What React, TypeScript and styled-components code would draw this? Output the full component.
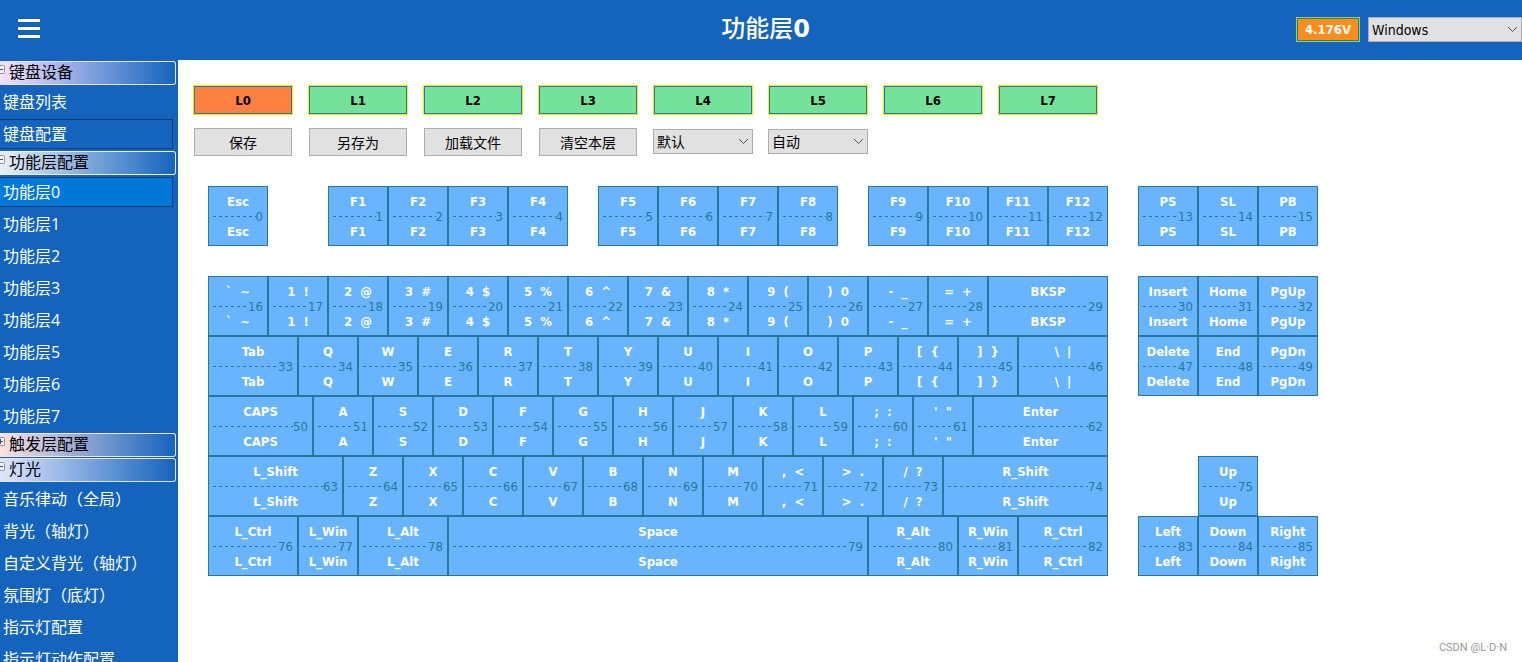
import React, { useState } from "react";
import styled, { createGlobalStyle, css } from "styled-components";

const uiFont = `"DejaVu Sans Condensed", "DejaVu Sans", "Noto Sans CJK SC", sans-serif`;
const menuFont = `"Open Sans", "Noto Sans CJK SC", sans-serif`;

const GlobalStyle = createGlobalStyle`
  * { box-sizing: border-box; }
  html, body, #root { height: 100%; }
  body { margin: 0; background: #fff; overflow: hidden; }
  button, select { font: inherit; margin: 0; border-radius: 0; }
`;

const Page = styled.div`
  display: flex;
  flex-direction: column;
  height: 100vh;
  font-family: ${uiFont};
`;

const Header = styled.header`
  flex: none;
  display: grid;
  grid-template-columns: 1fr auto 1fr;
  align-items: center;
  height: 60px;
  padding: 0 0 1px 9px;
  background: #1464be;
  color: #fff;
`;

const MenuButton = styled.button`
  justify-self: start;
  display: flex;
  padding: 8px;
  border: 0;
  background: none;
  color: #fff;
`;

const Title = styled.h1`
  margin: 0;
  padding-bottom: 1px;
  font: 700 24px/32px "DejaVu Sans", "Noto Sans CJK SC", sans-serif;
`;

const TitleText = styled.span`
  font-weight: 500;
`;

const HeaderTools = styled.div`
  justify-self: end;
  display: flex;
  align-items: center;
  gap: 8px;
`;

const Voltage = styled.output`
  width: 64px;
  height: 25px;
  border: 1px solid #b4b4b4;
  outline: 1px solid #12a012;
  outline-offset: -2px;
  background: #ff8c1e;
  font-size: 13px;
  font-weight: 700;
  line-height: 23px;
  text-align: center;
`;

const SelectBox = styled.span<{ $width: number }>`
  display: grid;
  align-items: center;
  width: ${(p) => p.$width}px;

  > * { grid-area: 1 / 1; }
  > svg { justify-self: end; margin-right: 4px; pointer-events: none; }
`;

const Select = styled.select`
  appearance: none;
  width: 100%;
  height: 25px;
  padding: 0 20px 0 3px;
  border: 1px solid #adadad;
  background: #e1e1e1;
  color: #000;
  font-size: 14px;
`;

const Body = styled.div`
  flex: 1;
  display: flex;
  min-height: 0;
`;

const Sidebar = styled.nav`
  flex: none;
  width: 178px;
  padding-top: 1px;
  overflow: hidden;
  background: #1464be;
  font: 16px/22px ${menuFont};
`;

const GroupHeader = styled.button<{ $tint: string }>`
  display: flex;
  align-items: center;
  gap: 4px;
  width: 176px;
  height: 24px;
  margin-bottom: 1px;
  padding: 0 0 2px;
  border: 1px solid ${(p) => p.$tint};
  border-left: 0;
  border-radius: 0 3px 3px 0;
  background: linear-gradient(90deg, ${(p) => p.$tint}, #1464be);
  color: #000;
  text-align: left;

  > svg { margin-bottom: 6px; }
`;

const MenuList = styled.ul`
  margin: 0;
  padding: 1px 0 0;
  list-style: none;
`;

const MenuItem = styled.a<{ $state?: "active" | "focused" }>`
  display: block;
  width: 173px;
  height: 30px;
  margin-bottom: 2px;
  padding-left: 3px;
  border: 1px solid transparent;
  border-left: 0;
  color: #fff;
  line-height: 28px;
  text-decoration: none;
  white-space: nowrap;
  ${(p) => p.$state && css`border-color: #0c3c72;`}
  ${(p) => p.$state === "active" && css`background: #0078d7;`}
`;

const Main = styled.main`
  flex: 1;
  min-width: 0;
  display: flex;
  flex-direction: column;
  padding: 25px 15px 6px;
`;

const Bar = styled.div`
  display: flex;
  gap: 15px;
`;

const LayerButton = styled.button<{ $on: boolean }>`
  width: 100px;
  height: 30px;
  padding: 0;
  border: 1px solid #f0f000;
  outline: 1px solid #28789b;
  outline-offset: -2px;
  background: ${(p) => (p.$on ? "#ff8040" : "#74e29a")};
  font-size: 13px;
  font-weight: 700;
`;

const ActionBar = styled(Bar)`
  align-items: flex-start;
  margin-top: 13px;
`;

const ActionButton = styled.button`
  width: 98px;
  height: 28px;
  margin: 0 1px;
  padding: 0;
  border: 1px solid #adadad;
  background: #e1e1e1;
  color: #000;
  font-size: 14px;
`;

const ActionSelects = styled(Bar)`
  padding-top: 1px;
`;

const Keyboard = styled.div`
  margin-top: 30px;
  padding-left: 15px;
`;

const KeyRow = styled.div<{ $gapAfter?: boolean }>`
  display: flex;
  margin-bottom: ${(p) => (p.$gapAfter ? 30 : 0)}px;
`;

const KeyGroup = styled.div<{ $gap: number }>`
  display: flex;
  margin-left: ${(p) => p.$gap}px;
`;

const KeyCap = styled.button<{ $width: number }>`
  flex: none;
  display: flex;
  flex-direction: column;
  justify-content: center;
  width: ${(p) => p.$width}px;
  height: 60px;
  padding: 2px 4px 0;
  border: 1px solid #28789b;
  background: #69b4ff;
  color: #fff;
  font-size: 13px;
  font-weight: 700;
  line-height: 16px;
  text-align: center;
  white-space: pre;
`;

const KeyDivider = styled.span`
  display: flex;
  align-items: center;
  height: 14px;
  color: #28789b;
  font-weight: 400;

  &::before {
    content: "";
    flex: 1;
    height: 1px;
    margin-bottom: 2px;
    background: repeating-linear-gradient(90deg, #28789b 0 3px, transparent 3px 6px);
  }
`;

const Watermark = styled.footer`
  margin-top: auto;
  align-self: flex-end;
  color: #999;
  font: 11px/16px Roboto, sans-serif;
`;

type KeySpec = string | [string, number];
type KeyGroupSpec = { gap?: number; first: number; keys: KeySpec[] };

const rows: KeyGroupSpec[][] = [
  [
    { first: 0, keys: ["Esc"] },
    { gap: 60, first: 1, keys: ["F1", "F2", "F3", "F4"] },
    { gap: 30, first: 5, keys: ["F5", "F6", "F7", "F8"] },
    { gap: 30, first: 9, keys: ["F9", "F10", "F11", "F12"] },
    { gap: 30, first: 13, keys: ["PS", "SL", "PB"] },
  ],
  [
    {
      first: 16,
      keys: ["`  ~", "1  !", "2  @", "3  #", "4  $", "5  %", "6  ^", "7  &", "8  *", "9  (", ")  0", "-  _", "=  +", ["BKSP", 120]],
    },
    { gap: 30, first: 30, keys: ["Insert", "Home", "PgUp"] },
  ],
  [
    { first: 33, keys: [["Tab", 90], "Q", "W", "E", "R", "T", "Y", "U", "I", "O", "P", "[  {", "]  }", ["\\  |", 90]] },
    { gap: 30, first: 47, keys: ["Delete", "End", "PgDn"] },
  ],
  [{ first: 50, keys: [["CAPS", 105], "A", "S", "D", "F", "G", "H", "J", "K", "L", ";  :", "'  \"", ["Enter", 135]] }],
  [
    { first: 63, keys: [["L_Shift", 135], "Z", "X", "C", "V", "B", "N", "M", ",  <", ">  .", "/  ?", ["R_Shift", 165]] },
    { gap: 90, first: 75, keys: ["Up"] },
  ],
  [
    {
      first: 76,
      keys: [["L_Ctrl", 90], "L_Win", ["L_Alt", 90], ["Space", 420], ["R_Alt", 90], "R_Win", ["R_Ctrl", 90]],
    },
    { gap: 30, first: 83, keys: ["Left", "Down", "Right"] },
  ],
];

const groups = [
  { title: "键盘设备", tint: "#f5e1ff", open: true, items: ["键盘列表", "键盘配置"] },
  {
    title: "功能层配置",
    tint: "#ebf0f5",
    open: true,
    items: ["功能层0", "功能层1", "功能层2", "功能层3", "功能层4", "功能层5", "功能层6", "功能层7"],
  },
  { title: "触发层配置", tint: "#ffe1e1", open: false, items: [] },
  {
    title: "灯光",
    tint: "#e1e6ff",
    open: true,
    items: ["音乐律动（全局）", "背光（轴灯）", "自定义背光（轴灯）", "氛围灯（底灯）", "指示灯配置", "指示灯动作配置"],
  },
];

const Chevron = () => (
  <svg width="11" height="7" viewBox="0 0 11 7" fill="none" stroke="#505050" aria-hidden="true">
    <path d="M1 1l4.500 4.500L10 1" />
  </svg>
);

const Toggle = ({ open }: { open: boolean }) => (
  <svg width="5" height="9" viewBox="4 0 5 9" aria-hidden="true">
    <rect x="0.500" y="0.500" width="8" height="8" rx="1" fill="#f5f5f5" stroke="#919191" />
    <path d={open ? "M2 4.500h5" : "M2 4.500h5M4.500 2v5"} stroke="#2850a0" />
  </svg>
);

function Dropdown({ label, options, width }: { label: string; options: string[]; width: number }) {
  return (
    <SelectBox $width={width}>
      <Select aria-label={label}>
        {options.map((o) => (
          <option key={o}>{o}</option>
        ))}
      </Select>
      <Chevron />
    </SelectBox>
  );
}

function Key({ spec, index }: { spec: KeySpec; index: number }) {
  const [label, width] = typeof spec === "string" ? [spec, 60] : spec;
  return (
    <KeyCap $width={width}>
      <span>{label}</span>
      <KeyDivider>{index}</KeyDivider>
      <span>{label}</span>
    </KeyCap>
  );
}

export default function App() {
  const [layer, setLayer] = useState(0);
  const stateOf = (item: string) =>
    item === `功能层${layer}` ? "active" : item === "键盘配置" ? "focused" : undefined;

  return (
    <Page>
      <GlobalStyle />
      <Header>
        <MenuButton aria-label="菜单">
          <svg width="24" height="23" viewBox="0 0 24 23" stroke="#fff" strokeWidth="3" aria-hidden="true">
            <path d="M1 2.500h22M1 10.500h22M1 18.500h22" />
          </svg>
        </MenuButton>
        <Title>
          <TitleText>功能层</TitleText>
          {layer}
        </Title>
        <HeaderTools>
          <Voltage>4.176V</Voltage>
          <Dropdown label="系统" options={["Windows", "Mac"]} width={154} />
        </HeaderTools>
      </Header>
      <Body>
        <Sidebar>
          {groups.map((g) => (
            <section key={g.title}>
              <GroupHeader $tint={g.tint} aria-expanded={g.open}>
                <Toggle open={g.open} />
                {g.title}
              </GroupHeader>
              {g.open && (
                <MenuList>
                  {g.items.map((item) => (
                    <li key={item}>
                      <MenuItem href="#" $state={stateOf(item)}>
                        {item}
                      </MenuItem>
                    </li>
                  ))}
                </MenuList>
              )}
            </section>
          ))}
        </Sidebar>
        <Main>
          <Bar>
            {[0, 1, 2, 3, 4, 5, 6, 7].map((n) => (
              <LayerButton key={n} $on={n === layer} onClick={() => setLayer(n)}>
                L{n}
              </LayerButton>
            ))}
          </Bar>
          <ActionBar>
            {["保存", "另存为", "加载文件", "清空本层"].map((t) => (
              <ActionButton key={t}>{t}</ActionButton>
            ))}
            <ActionSelects>
              <Dropdown label="模式" options={["默认"]} width={100} />
              <Dropdown label="切换" options={["自动"]} width={100} />
            </ActionSelects>
          </ActionBar>
          <Keyboard>
            {rows.map((row, r) => (
              <KeyRow key={r} $gapAfter={r === 0}>
                {row.map((group) => (
                  <KeyGroup key={group.first} $gap={group.gap ?? 0}>
                    {group.keys.map((spec, i) => (
                      <Key key={i} spec={spec} index={group.first + i} />
                    ))}
                  </KeyGroup>
                ))}
              </KeyRow>
            ))}
          </Keyboard>
          <Watermark>CSDN @L·D·N</Watermark>
        </Main>
      </Body>
    </Page>
  );
}
